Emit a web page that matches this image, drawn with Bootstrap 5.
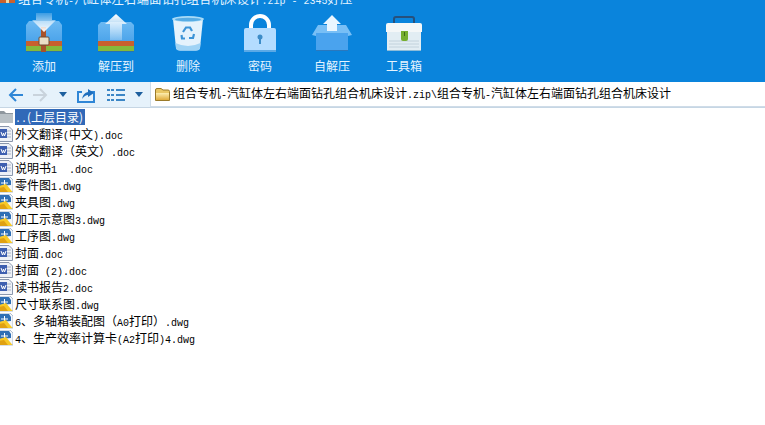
<!DOCTYPE html>
<html lang="zh">
<head>
    <meta charset="UTF-8">
    <meta name="viewport" content="width=device-width, initial-scale=1.0">
    <title>2345好压</title>
    <link href="https://cdn.jsdelivr.net/npm/bootstrap@5.3.0/dist/css/bootstrap.min.css" rel="stylesheet">

    <style>
        html, body {
            height: 100%;
            overflow: hidden;
        }
        body {
            font-family: "Noto Sans CJK SC", sans-serif;
            font-size: 12px;
            color: #000;
            background-color: #fff;
        }
        .lat {
            font-family: "Liberation Mono", monospace;
            font-size: 10px;
        }
        .top-blue {
            height: 82px;
            background-color: #0a84dc;
            color: #fff;
        }
        .title-strip {
            height: 8px;
            overflow: hidden;
            font-size: 12.5px;
            line-height: 12px;
            color: #e4f3ff;
        }
        .title-strip svg {
            flex: none;
            margin-right: 3px;
        }
        .tool-row {
            padding-left: 8px;
        }
        .tool-btn {
            width: 72px;
            height: 74px;
        }
        .tool-btn svg {
            display: block;
            margin-top: 4px;
        }
        .tool-btn span {
            margin-top: 3px;
            line-height: 14px;
            color: #e6f4ff;
        }
        .nav-strip {
            height: 26px;
            background-color: #e6f2fb;
            border-bottom: 1px solid #c6d6e4;
        }
        .nav-strip > svg {
            flex: none;
        }
        .path-box {
            height: 25px;
            margin-left: 7px;
            padding-left: 4px;
            background-color: #fff;
            border-left: 1px solid #cfdce8;
            border-bottom: 1px solid #cfdce8;
            line-height: 25px;
            white-space: pre;
        }
        .path-box svg {
            margin-right: 3px;
        }
        .file-list {
            padding-top: 1px;
        }
        .file-row {
            height: 17px;
            line-height: 16px;
            white-space: pre;
        }
        .file-row svg {
            flex: none;
            margin-right: 1px;
        }
        .file-name.picked {
            height: 16px;
            padding: 0 2px 0 0;
            background-color: #3169b8;
            color: #fff;
        }
    </style>
</head>
<body>

<svg width="0" height="0" class="d-block position-absolute">
    <defs>
        <linearGradient id="wrapBlue" x1="0" y1="0" x2="0" y2="1">
            <stop offset="0" stop-color="#6bb9f3"/>
            <stop offset="1" stop-color="#3d9ae6"/>
        </linearGradient>
        <linearGradient id="arrowFade" x1="0" y1="0" x2="0" y2="1">
            <stop offset="0" stop-color="#fff"/>
            <stop offset="1" stop-color="#fff" stop-opacity=".25"/>
        </linearGradient>
        <linearGradient id="arrowDown" x1="0" y1="1" x2="0" y2="0">
            <stop offset="0" stop-color="#fff"/>
            <stop offset="1" stop-color="#fff" stop-opacity=".2"/>
        </linearGradient>
        <linearGradient id="yellowFold" x1="0" y1="0" x2="0" y2="1">
            <stop offset="0" stop-color="#fdeeb0"/>
            <stop offset="1" stop-color="#e0ab3c"/>
        </linearGradient>
        <symbol id="docIcon" viewBox="0 0 16 16">
            <path d="M2.5 .5H12L15.5 4V15.5H2.5Z" fill="#eef1f7" stroke="#8a97ad"/>
            <path d="M10 5h4M10 8h4M10 11h4" stroke="#a9b4c6"/>
            <rect x="3" y="3" width="7" height="9" fill="#3d5fb0"/>
            <path d="M4 6l1.5 4 1-3 1 3L9 6" fill="none" stroke="#fff"/>
        </symbol>
        <symbol id="dwgIcon" viewBox="0 0 16 16">
            <path d="M2 0H13L16 3V15H2Z" fill="#f4f7fb" stroke="#7f95b0" stroke-width=".6"/>
            <path d="M2.5 1H12L14 4V8L2.5 9Z" fill="#2f6fb5"/>
            <path d="M4 6h7M7.5 3v5" stroke="#fff"/>
            <path d="M2 15V9L9 7 15.500 15Z" fill="#f7c928"/>
            <path d="M2 15V11L7 10 11 15Z" fill="#e0a112"/>
        </symbol>
        <symbol id="upFolder" viewBox="0 0 16 14">
            <path d="M0 2H6L8 4H15V14H0Z" fill="#8e979e"/>
            <path d="M0 5H15V14H0Z" fill="#b9c1c6"/>
        </symbol>
    </defs>
</svg>

<div class="top-blue d-flex flex-column">
    <div class="title-strip d-flex align-items-end">
        <svg width="15" height="8" viewBox="0 0 15 8">
            <rect width="15" height="3" fill="#c9622f"/>
            <rect y="0" x="6" width="3" height="3" fill="#ecd9a8"/>
        </svg>
        <div><span>组合专机</span><span class="lat">-</span>汽缸体左右端面钻孔组合机床设计<span class="lat">.zip - 2345</span>好压</div>
    </div>
    <div class="tool-row d-flex">
        <div class="tool-btn d-flex flex-column align-items-center">
            <svg width="48" height="44" viewBox="0 0 48 44">
                <path d="M9 9H39L42 13V39H6V13Z" fill="url(#wrapBlue)"/>
                <rect x="6" y="29" width="36" height="5" fill="#c8602e"/>
                <rect x="6" y="34" width="36" height="5" fill="#84ba3b"/>
                <rect x="6" y="39" width="36" height="1" fill="#2a72b0"/>
                <rect x="21" y="15" width="5" height="25" fill="#a8522a"/>
                <rect x="19" y="25" width="10" height="8" rx="1" fill="#eadfc6" stroke="#6f4a30"/>
                <path d="M16 1H32V8L36 8 24 20 12 8H16Z" fill="url(#arrowDown)"/>
            </svg>
            <span>添加</span>
        </div>
        <div class="tool-btn d-flex flex-column align-items-center">
            <svg width="48" height="44" viewBox="0 0 48 44">
                <path d="M9 10H39L42 13V39H6V13Z" fill="url(#wrapBlue)"/>
                <rect x="6" y="29" width="36" height="5" fill="#c8602e"/>
                <rect x="6" y="34" width="36" height="5" fill="#84ba3b"/>
                <rect x="6" y="39" width="36" height="1" fill="#2a72b0"/>
                <path d="M24 2 35 12H30V28H18V12H13Z" fill="url(#arrowFade)"/>
            </svg>
            <span>解压到</span>
        </div>
        <div class="tool-btn d-flex flex-column align-items-center">
            <svg width="48" height="44" viewBox="0 0 48 44">
                <path d="M9 7 12 36Q12.500 38.500 16 38.500H32Q35.500 38.500 36 36L39 7Z" fill="#e4f2fc"/>
                <path d="M16 38.500H32Q35.500 38.500 36 36L36.500 31Q24 37 11.500 31L12 36Q12.500 38.500 16 38.500Z" fill="#9fd3f5"/>
                <ellipse cx="24" cy="7" rx="16" ry="3" fill="#a9dbf7"/>
                <ellipse cx="24" cy="7.500" rx="13" ry="1.800" fill="#57ace4"/>
                <g fill="none" stroke="#3c93d6" stroke-width="2.200">
                    <path d="M19 20 22 15.500H26L28 19"/>
                    <path d="M30 22 29 26H25"/>
                    <path d="M21 26.500H18L17.500 23"/>
                </g>
            </svg>
            <span>删除</span>
        </div>
        <div class="tool-btn d-flex flex-column align-items-center">
            <svg width="48" height="44" viewBox="0 0 48 44">
                <path d="M15 18V13A9 9 0 0 1 33 13V18" fill="none" stroke="#fff" stroke-width="4"/>
                <rect x="8" y="16" width="32" height="24" rx="2" fill="#b4dcff"/>
                <rect x="8" y="38" width="32" height="2" fill="#5ba9e6"/>
                <circle cx="24" cy="25" r="2.500" fill="#3d8cc8"/>
                <rect x="23" y="25" width="2" height="7" fill="#3d8cc8"/>
            </svg>
            <span>密码</span>
        </div>
        <div class="tool-btn d-flex flex-column align-items-center">
            <svg width="48" height="44" viewBox="0 0 48 44">
                <rect x="8" y="20" width="32" height="18" fill="#4aa3ee"/>
                <rect x="8" y="38" width="32" height="1" fill="#2a78bd"/>
                <path d="M10 13H38L44 23 40 24V21H8V24L4 23Z" fill="#78bff6"/>
                <path d="M24 3 33 12H29V19H19V12H15Z" fill="#eaf6ff"/>
            </svg>
            <span>自解压</span>
        </div>
        <div class="tool-btn d-flex flex-column align-items-center">
            <svg width="48" height="44" viewBox="0 0 48 44">
                <path d="M14 12V7Q14 5 16 5H32Q34 5 34 7V12" fill="none" stroke="#27507c" stroke-width="2"/>
                <path d="M8 11H40Q42 11 42 13V20H6V13Q6 11 8 11Z" fill="#f4f7f8"/>
                <rect x="7" y="20" width="34" height="19" fill="#e2edf3"/>
                <path d="M9 29H39M9 32H39M9 35H39" stroke="#c2d2dc"/>
                <rect x="7" y="38" width="34" height="1" fill="#8dbcd8"/>
                <path d="M21 19H28V27Q28 29 26 29H23Q21 29 21 27Z" fill="#76ae2f"/>
                <rect x="24" y="20" width="1" height="4" fill="#3f6b16"/>
            </svg>
            <span>工具箱</span>
        </div>
    </div>
</div>

<div class="nav-strip d-flex align-items-center">
    <svg class="ms-2" width="16" height="14" viewBox="0 0 16 14">
        <path d="M15 7H2M8 1 2 7l6 6" fill="none" stroke="#2f86d6" stroke-width="2"/>
    </svg>
    <svg class="ms-2" width="16" height="14" viewBox="0 0 16 14" style="margin-left:9px">
        <path d="M1 7H14M8 1l6 6-6 6" fill="none" stroke="#c9d3dc" stroke-width="2"/>
    </svg>
    <svg width="8" height="5" viewBox="0 0 8 5" style="margin-left:11px">
        <path d="M0 0H8L4 5Z" fill="#1d5f9e"/>
    </svg>
    <svg width="20" height="16" viewBox="0 0 20 16" style="margin-left:9px">
        <path d="M6 5H2V15H18V5H15" fill="none" stroke="#2f86d6" stroke-width="2"/>
        <path d="M6 12Q7 6 12 5V2L18 6 12 10V8Q9 8 6 12Z" fill="#1f6fbe"/>
    </svg>
    <svg width="18" height="12" viewBox="0 0 18 12" style="margin-left:11px">
        <g fill="#3b86c6">
            <path d="M0 0h3v2H0zM4 0h3v2H4zM9 0h9v2H9zM0 5h3v2H0zM4 5h3v2H4zM9 5h9v2H9zM0 10h3v2H0zM4 10h3v2H4zM9 10h9v2H9z"/>
        </g>
    </svg>
    <svg width="8" height="5" viewBox="0 0 8 5" style="margin-left:10px">
        <path d="M0 0H8L4 5Z" fill="#1d5f9e"/>
    </svg>
    <div class="path-box flex-grow-1 d-flex align-items-center">
        <svg width="15" height="13" viewBox="0 0 15 13">
            <path d="M.5 2Q.5 .5 2 .5H6L8 2H13Q14.500 2 14.500 3.500V12.500H.5Z" fill="#e9c766" stroke="#9a7a2a"/>
            <path d="M1 5H14V12H1Z" fill="url(#yellowFold)"/>
        </svg>
        <div><span>组合专机</span><span class="lat">-</span>汽缸体左右端面钻孔组合机床设计<span class="lat">.zip\</span>组合专机<span class="lat">-</span>汽缸体左右端面钻孔组合机床设计</div>
    </div>
</div>

<div class="file-list">
    <div class="file-row d-flex"><svg width="14" height="14" viewBox="2 0 14 14"><use href="#upFolder" width="16" height="14"/></svg><span class="file-name picked"><span class="lat">..</span>(上层目录)</span></div>
    <div class="file-row d-flex"><svg width="14" height="16" viewBox="3 0 14 16"><use href="#docIcon" width="16" height="16"/></svg><span class="file-name">外文翻译<span class="lat">(</span>中文<span class="lat">).doc</span></span></div>
    <div class="file-row d-flex"><svg width="14" height="16" viewBox="3 0 14 16"><use href="#docIcon" width="16" height="16"/></svg><span class="file-name">外文翻译（英文）<span class="lat">.doc</span></span></div>
    <div class="file-row d-flex"><svg width="14" height="16" viewBox="3 0 14 16"><use href="#docIcon" width="16" height="16"/></svg><span class="file-name">说明书<span class="lat">1  .doc</span></span></div>
    <div class="file-row d-flex"><svg width="14" height="16" viewBox="3 0 14 16"><use href="#dwgIcon" width="16" height="16"/></svg><span class="file-name">零件图<span class="lat">1.dwg</span></span></div>
    <div class="file-row d-flex"><svg width="14" height="16" viewBox="3 0 14 16"><use href="#dwgIcon" width="16" height="16"/></svg><span class="file-name">夹具图<span class="lat">.dwg</span></span></div>
    <div class="file-row d-flex"><svg width="14" height="16" viewBox="3 0 14 16"><use href="#dwgIcon" width="16" height="16"/></svg><span class="file-name">加工示意图<span class="lat">3.dwg</span></span></div>
    <div class="file-row d-flex"><svg width="14" height="16" viewBox="3 0 14 16"><use href="#dwgIcon" width="16" height="16"/></svg><span class="file-name">工序图<span class="lat">.dwg</span></span></div>
    <div class="file-row d-flex"><svg width="14" height="16" viewBox="3 0 14 16"><use href="#docIcon" width="16" height="16"/></svg><span class="file-name">封面<span class="lat">.doc</span></span></div>
    <div class="file-row d-flex"><svg width="14" height="16" viewBox="3 0 14 16"><use href="#docIcon" width="16" height="16"/></svg><span class="file-name">封面<span class="lat"> (2).doc</span></span></div>
    <div class="file-row d-flex"><svg width="14" height="16" viewBox="3 0 14 16"><use href="#docIcon" width="16" height="16"/></svg><span class="file-name">读书报告<span class="lat">2.doc</span></span></div>
    <div class="file-row d-flex"><svg width="14" height="16" viewBox="3 0 14 16"><use href="#dwgIcon" width="16" height="16"/></svg><span class="file-name">尺寸联系图<span class="lat">.dwg</span></span></div>
    <div class="file-row d-flex"><svg width="14" height="16" viewBox="3 0 14 16"><use href="#dwgIcon" width="16" height="16"/></svg><span class="file-name"><span class="lat">6</span>、多轴箱装配图（<span class="lat">A0</span>打印）<span class="lat">.dwg</span></span></div>
    <div class="file-row d-flex"><svg width="14" height="16" viewBox="3 0 14 16"><use href="#dwgIcon" width="16" height="16"/></svg><span class="file-name"><span class="lat">4</span>、生产效率计算卡<span class="lat">(A2</span>打印<span class="lat">)4.dwg</span></span></div>
</div>

<script src="https://cdn.jsdelivr.net/npm/bootstrap@5.3.0/dist/js/bootstrap.bundle.min.js"></script>
</body>
</html>
